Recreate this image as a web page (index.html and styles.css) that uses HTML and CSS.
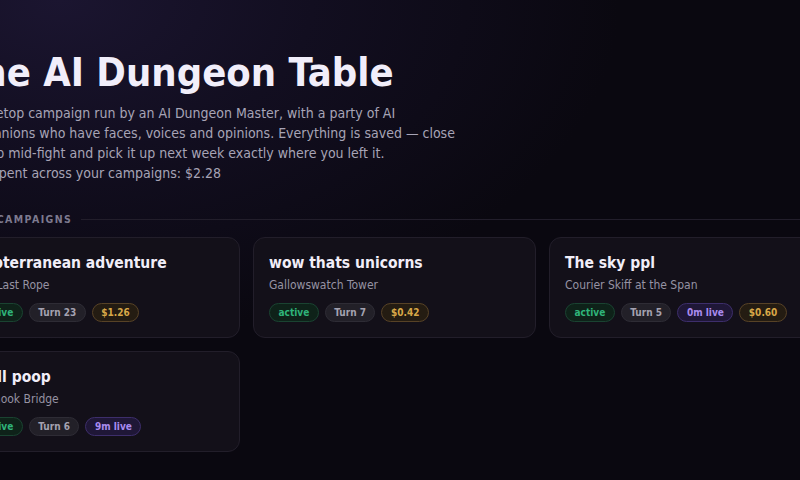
FILE: index.html
```html
<!DOCTYPE html>
<html>
  <head lang="en">
    <meta charset="UTF-8" />
    <title>The AI Dungeon Table</title>
    <link rel="stylesheet" href="styles.css">
  </head>

  <body>
    <div class="page">
      <h1 class="title">The AI Dungeon Table</h1>
      <div class="intro">
        <p>A tabletop campaign run by an AI Dungeon Master, with a party of AI companions who have faces, voices and opinions. Everything is saved — close the tab mid-fight and pick it up next week exactly where you left it.</p>
        <p class="spent">Total spent across your campaigns: $2.28</p>
      </div>

      <div class="section-head">Your campaigns</div>

      <div class="cards">
        <div class="card">
          <div class="card-title">Subterranean adventure</div>
          <div class="card-place">The Last Rope</div>
          <div class="tags">
            <span class="tag tag-active">active</span>
            <span class="tag tag-turn">Turn 23</span>
            <span class="tag tag-cost">$1.26</span>
          </div>
        </div>
        <div class="card">
          <div class="card-title">wow thats unicorns</div>
          <div class="card-place">Gallowswatch Tower</div>
          <div class="tags">
            <span class="tag tag-active">active</span>
            <span class="tag tag-turn">Turn 7</span>
            <span class="tag tag-cost">$0.42</span>
          </div>
        </div>
        <div class="card">
          <div class="card-title">The sky ppl</div>
          <div class="card-place">Courier Skiff at the Span</div>
          <div class="tags">
            <span class="tag tag-active">active</span>
            <span class="tag tag-turn">Turn 5</span>
            <span class="tag tag-live">0m live</span>
            <span class="tag tag-cost">$0.60</span>
          </div>
        </div>
        <div class="card">
          <div class="card-title">Troll poop</div>
          <div class="card-place">Fishhook Bridge</div>
          <div class="tags">
            <span class="tag tag-active">active</span>
            <span class="tag tag-turn">Turn 6</span>
            <span class="tag tag-live">9m live</span>
          </div>
        </div>
      </div>
    </div>
  </body>
</html>
```

FILE: styles.css
```css
html,
body,
div,
h1,
p {
  margin: 0;
  padding: 0;
}

html {
  background: #0a0810;
}

body {
  min-height: 480px;
  overflow: hidden;
  color: #ece9f4;
  font-family: "DejaVu Sans Condensed", "DejaVu Sans", sans-serif;
  background: radial-gradient(ellipse 560px 340px at 60px 0, #1b1530 0%, #120e20 45%, rgba(10, 8, 16, 0) 100%),
    #0a0810;
}

.page {
  width: 875px;
  margin-left: -43px;
  padding-top: 49px;
}

.title {
  font-size: 39.6px;
  line-height: 46px;
  font-weight: 700;
  color: #f1eefa;
}

.intro {
  margin-top: 8px;
  margin-left: 2px;
  max-width: 505px;
  font-size: 14px;
  line-height: 20px;
  color: #a7a4b6;
}

.section-head {
  display: flex;
  align-items: center;
  gap: 9px;
  margin-top: 28px;
  font-size: 10.5px;
  line-height: 16px;
  font-weight: 700;
  letter-spacing: 1.4px;
  text-transform: uppercase;
  color: #7d7a8f;
}

.section-head::after {
  content: '';
  flex: 1;
  height: 1px;
  background: #221e2b;
}

.cards {
  display: grid;
  grid-template-columns: repeat(3, 1fr);
  gap: 13px;
  margin-top: 10px;
}

.card {
  padding: 15px 15px 15px;
  background: #131019;
  border: 1px solid #221e2a;
  border-radius: 12px;
}

.card-title {
  font-size: 15.5px;
  line-height: 20px;
  font-weight: 700;
  color: #f1eef8;
}

.card-place {
  margin-top: 4px;
  font-size: 12px;
  line-height: 16px;
  color: #9693a3;
}

.tags {
  display: flex;
  gap: 6px;
  margin-top: 10px;
}

.tag {
  height: 19px;
  padding: 0 8.5px;
  font-size: 10px;
  line-height: 17px;
  font-weight: 700;
  border: 1px solid;
  border-radius: 10px;
  box-sizing: border-box;
}

.tag-active {
  color: #2fb47a;
  background: #0e2219;
  border-color: #1a4331;
}

.tag-turn {
  color: #a4a2b0;
  background: #222028;
  border-color: #2e2c35;
}

.tag-live {
  color: #a98bf0;
  background: #1f1737;
  border-color: #3d2e6b;
}

.tag-cost {
  color: #d8a848;
  background: #241c12;
  border-color: #574226;
}
```
